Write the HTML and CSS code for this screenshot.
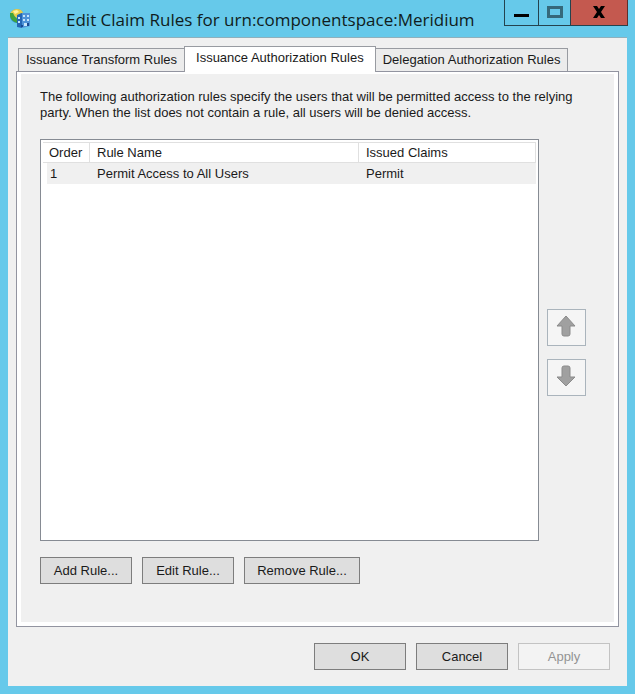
FILE: index.html
```html
<!DOCTYPE html>
<html lang="en">

<head>
    <meta charset="UTF-8">
    <meta name="viewport" content="width=device-width, initial-scale=1.0">
    <title>Edit Claim Rules for urn:componentspace:Meridium</title>
    <link rel="stylesheet" href="styles.css">
</head>

<body>
    <div class="window">
        <header class="titlebar">
            <svg class="app-icon" viewBox="0 0 22 22" aria-hidden="true">
                <circle cx="8" cy="8" r="7" fill="#2e8fd0" />
                <path d="M1 6 Q3 1 8 1 Q13 1 14 5 L10 6 L8 10 L5 8 L3 9z" fill="#e8cf4c" />
                <path d="M1 5 L4 5 L6 9 L9 12 L8 15 Q2 13 1 8z" fill="#3fa33c" />
                <path d="M4 3 L8 2 L10 4 L6 6z" fill="#fff3a0" />
                <path d="M8 7 L13 5 V20 L8 19z" fill="#2467b5" />
                <path d="M13 5 H21 V18 L13 20z" fill="#4f94d8" />
                <path d="M9 9h2v2H9zM9 13h2v2H9zM14 7h2v2h-2zM18 7h2v2h-2zM14 11h2v2h-2zM18 11h2v2h-2zM15 15h3v3h-3z" fill="#c5e5fb" />
                <path d="M12 17h2v2h-2zM18 15h2v3h-2z" fill="#174b91" />
            </svg>
            <h1 class="title">Edit Claim Rules for urn:componentspace:Meridium</h1>
            <div class="controls">
                <button class="control minimize" type="button" aria-label="Minimize">
                    <svg width="15" height="12" viewBox="0 0 15 12"><path d="M0 8h15v3H0z" fill="#000" /></svg>
                </button>
                <button class="control maximize" type="button" aria-label="Maximize" disabled>
                    <svg width="16" height="12" viewBox="0 0 16 12"><path d="M1.5 1.5h13v9h-13z" fill="none" stroke="#35697b" stroke-width="3" /></svg>
                </button>
                <button class="control close" type="button" aria-label="Close">
                    <svg width="14" height="12" viewBox="0 0 14 12"><path d="M1 0h4l2 3 2-3h4L9 6l4 6H9L7 9l-2 3H1l4-6z" fill="#000" /></svg>
                </button>
            </div>
        </header>

        <main class="dialog">
            <div class="tabs" role="tablist">
                <button class="tab" type="button" role="tab" aria-selected="false">Issuance Transform Rules</button>
                <button class="tab active" type="button" role="tab" aria-selected="true">Issuance Authorization Rules</button>
                <button class="tab" type="button" role="tab" aria-selected="false">Delegation Authorization Rules</button>
            </div>

            <section class="panel" role="tabpanel">
                <p class="description">The following authorization rules specify the users that will be permitted access to the relying party. When the list does not contain a rule, all users will be denied access.</p>

                <div class="rules">
                    <div class="list">
                        <table class="rule-table">
                            <thead>
                                <tr>
                                    <th class="col-order">Order</th>
                                    <th class="col-name">Rule Name</th>
                                    <th>Issued Claims</th>
                                </tr>
                            </thead>
                            <tbody>
                                <tr>
                                    <td>1</td>
                                    <td>Permit Access to All Users</td>
                                    <td>Permit</td>
                                </tr>
                            </tbody>
                        </table>
                    </div>
                    <div class="order-buttons">
                        <button class="arrow" type="button" aria-label="Move up" disabled>
                            <svg width="20" height="22" viewBox="0 0 20 22"><path d="M10 1 L19 11 H14 V19 Q14 21 12 21 H8 Q6 21 6 19 V11 H1z" fill="#a0a0a0" stroke="#8b8b8b" /></svg>
                        </button>
                        <button class="arrow" type="button" aria-label="Move down" disabled>
                            <svg width="20" height="22" viewBox="0 0 20 22"><path d="M10 21 L1 12 H6 V3 Q6 1 8 1 H12 Q14 1 14 3 V12 H19z" fill="#a0a0a0" stroke="#8b8b8b" /></svg>
                        </button>
                    </div>
                </div>

                <div class="actions">
                    <button class="btn" type="button">Add Rule...</button>
                    <button class="btn" type="button">Edit Rule...</button>
                    <button class="btn wide" type="button">Remove Rule...</button>
                </div>
            </section>

            <footer class="footer">
                <button class="btn" type="button">OK</button>
                <button class="btn" type="button">Cancel</button>
                <button class="btn" type="button" disabled>Apply</button>
            </footer>
        </main>
    </div>
</body>

</html>
```
FILE: styles.css
```css
* {
    box-sizing: border-box;
}

body {
    margin: 0;
    color: #1a1a1a;
    font-family: "Liberation Sans", Arial, sans-serif;
    font-size: 13px;
    line-height: 16px;
}

button {
    margin: 0;
    padding: 0;
    color: inherit;
    font: inherit;
}

.window {
    display: flex;
    flex-direction: column;
    min-height: 100vh;
    padding: 0 8px 8px;
    background-color: #66c9ea;
}

.titlebar {
    display: flex;
    align-items: flex-start;
    height: 37px;
}

.app-icon {
    width: 22px;
    height: 22px;
    margin: 8px 0 0 1px;
}

.title {
    flex: 1;
    margin: 8px 0 0 35px;
    color: #101c20;
    font-family: "Open Sans", "Noto Sans", sans-serif;
    font-size: 17px;
    font-weight: 400;
    line-height: 24px;
    white-space: nowrap;
}

/* the caption buttons hang from the top edge of the window */
.controls {
    display: flex;
    margin-right: -1px;
}

.control {
    display: flex;
    align-items: center;
    justify-content: center;
    width: 32px;
    height: 26px;
    padding-bottom: 1px;
    border: 1px solid #24434e;
    border-top: none;
    border-right: none;
    background-color: transparent;
}

.control.minimize {
    width: 34px;
}

.control.close {
    width: 58px;
    border-right: 1px solid #5c302d;
    background-color: #c4594f;
}

.dialog {
    display: flex;
    flex: 1;
    flex-direction: column;
    padding: 8px 8px 16px;
    border-top: 1px solid #8fb0bc;
    background-color: #f0f0f0;
}

.tabs {
    display: flex;
    align-items: flex-end;
    padding: 0 2px;
}

.tab {
    height: 23px;
    padding: 0 7px;
    border: 1px solid #989ba1;
    border-bottom: none;
    background-color: #ececec;
    white-space: nowrap;
}

.tab.active {
    z-index: 1;
    height: 26px;
    margin: 0 -1px -1px;
    padding: 0 11px 3px;
    background-color: #fff;
}

/* white frame inside the border, thinner along the top */
.panel {
    display: flex;
    flex: 1;
    flex-direction: column;
    padding: 17px 31px 42px 23px;
    border: 1px solid #9294a0;
    background-color: #f0f0f0;
    box-shadow: inset 4px 2px #fff, inset -4px -4px #fff;
}

.description {
    margin: 0 0 18px;
}

.rules {
    display: flex;
    flex: 1;
    gap: 8px;
}

.list {
    flex: 1;
    padding: 2px;
    border: 1px solid #868b93;
    background-color: #fff;
}

.rule-table {
    width: 100%;
    border-collapse: separate;
    border-spacing: 0;
    table-layout: fixed;
}

.rule-table th,
.rule-table td {
    height: 21px;
    padding: 0 7px;
    font-weight: 400;
    text-align: left;
}

.rule-table th {
    border: 1px solid #e0e0e0;
    border-left: none;
}

.rule-table td {
    background-color: #f0f0f0;
}

.rule-table td:first-child {
    padding-left: 3px;
    border-left: 4px solid #fff;
}

.rule-table .col-order {
    width: 47px;
    padding: 0 6px;
}

.col-name {
    width: 269px;
}

.order-buttons {
    display: flex;
    flex-direction: column;
    justify-content: center;
    gap: 13px;
    padding: 24px 1px 0 0;
}

.arrow {
    display: flex;
    align-items: center;
    justify-content: center;
    width: 39px;
    height: 37px;
    padding: 0 2px 3px 0;
    border: 1px solid #aab4bc;
    background-color: #f5f5f5;
}

.actions {
    display: flex;
    gap: 10px;
    margin-top: 16px;
}

.btn {
    width: 92px;
    height: 27px;
    border: 1px solid #7d7d7d;
    background-color: #dedede;
}

.btn.wide {
    width: 116px;
}

.btn:disabled {
    border-color: #c3c3c3;
    background-color: #f3f3f3;
    color: #939393;
}

.footer {
    display: flex;
    justify-content: flex-end;
    gap: 10px;
    padding: 16px 9px 0 0;
}
```
